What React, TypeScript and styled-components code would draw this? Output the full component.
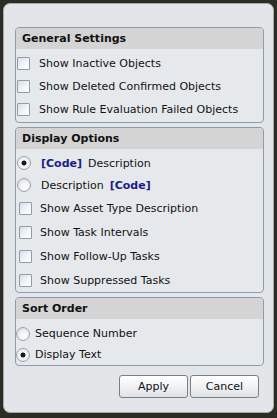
import styled, { createGlobalStyle } from "styled-components";

const GlobalStyle = createGlobalStyle`
  html, body {
    margin: 0;
    padding: 0;
    background: #2c2c24;
  }
  body {
    font-family: "DejaVu Sans", "Liberation Sans", sans-serif;
    font-size: 11px;
    color: #111;
  }
`;

interface Option {
  label: string;
  kind: "check" | "radio";
  checked?: boolean;
  codeFirst?: boolean;
  codeLast?: boolean;
}

const generalOptions: Option[] = [
  { label: "Show Inactive Objects", kind: "check" },
  { label: "Show Deleted Confirmed Objects", kind: "check" },
  { label: "Show Rule Evaluation Failed Objects", kind: "check" },
];

const displayOptions: Option[] = [
  { label: "Description", kind: "radio", checked: true, codeFirst: true },
  { label: "Description", kind: "radio", codeLast: true },
  { label: "Show Asset Type Description", kind: "check" },
  { label: "Show Task Intervals", kind: "check" },
  { label: "Show Follow-Up Tasks", kind: "check" },
  { label: "Show Suppressed Tasks", kind: "check" },
];

const sortOptions: Option[] = [
  { label: "Sequence Number", kind: "radio" },
  { label: "Display Text", kind: "radio", checked: true },
];

function OptionRow({
  option,
  height,
  indent,
  gap,
}: {
  option: Option;
  height: number;
  indent: number;
  gap: number;
}) {
  return (
    <Row $height={height} $indent={indent} $gap={gap}>
      {option.kind === "check" ? (
        <CheckBox type="checkbox" defaultChecked={option.checked} />
      ) : (
        <Radio type="radio" defaultChecked={option.checked} readOnly />
      )}
      <Label>
        {option.codeFirst && <Code>[Code]</Code>}
        {option.label}
        {option.codeLast && <Code $after>[Code]</Code>}
      </Label>
    </Row>
  );
}

function App() {
  return (
    <>
      <GlobalStyle />
      <Screen>
        <Dialog>
          <Group>
            <GroupHeader>General Settings</GroupHeader>
            <GroupBody $top={3} $bottom={1}>
              {generalOptions.map((o) => (
                <OptionRow key={o.label} option={o} height={23} indent={1} gap={9} />
              ))}
            </GroupBody>
          </Group>
          <Group>
            <GroupHeader>Display Options</GroupHeader>
            <GroupBody $top={3} $bottom={0}>
              {displayOptions.map((o, i) =>
                o.kind === "radio" ? (
                  <OptionRow key={i} option={o} height={22} indent={1} gap={10} />
                ) : (
                  <OptionRow key={i} option={o} height={24} indent={3} gap={8} />
                )
              )}
            </GroupBody>
          </Group>
          <Group>
            <GroupHeader>Sort Order</GroupHeader>
            <GroupBody $top={4} $bottom={0}>
              {sortOptions.map((o) => (
                <OptionRow key={o.label} option={o} height={21} indent={0} gap={5} />
              ))}
            </GroupBody>
          </Group>
          <Buttons>
            <Button>Apply</Button>
            <Button>Cancel</Button>
          </Buttons>
        </Dialog>
      </Screen>
    </>
  );
}

const Screen = styled.div`
  width: 277px;
  height: 418px;
  padding: 3px 3px 5px 3px;
  box-sizing: border-box;
`;

const Dialog = styled.div`
  height: 100%;
  box-sizing: border-box;
  padding: 23px 9px 0 11px;
  background: #e3e6e9;
  border: 1px solid #a4a9ae;
  border-radius: 7px;
  display: flex;
  flex-direction: column;
  gap: 4px;
`;

const Group = styled.section`
  border: 1px solid #8d9bae;
  border-radius: 4px;
  background: #e6e9ec;
  overflow: hidden;
`;

const GroupHeader = styled.div`
  height: 21px;
  line-height: 21px;
  padding-left: 6px;
  background: #d4d4d4;
  font-weight: bold;
  font-size: 11px;
  color: #111;
`;

const GroupBody = styled.div<{ $top: number; $bottom: number }>`
  display: flex;
  flex-direction: column;
  padding: ${(p) => p.$top}px 0 ${(p) => p.$bottom}px 0;
`;

const Row = styled.label<{ $height: number; $indent: number; $gap: number }>`
  display: flex;
  align-items: center;
  height: ${(p) => p.$height}px;
  padding-left: ${(p) => p.$indent}px;
  gap: ${(p) => p.$gap}px;
`;

const CheckBox = styled.input`
  appearance: none;
  margin: 0;
  width: 13px;
  height: 13px;
  box-sizing: border-box;
  border: 1px solid #8e9cae;
  border-radius: 1px;
  background: linear-gradient(135deg, #d9dee4 0%, #f4f6f8 60%, #ffffff 100%);
  flex: none;
`;

const Radio = styled.input`
  appearance: none;
  margin: 0;
  width: 14px;
  height: 14px;
  box-sizing: border-box;
  border: 1px solid #98a2ad;
  border-radius: 50%;
  background: radial-gradient(circle at 60% 65%, #ffffff 0%, #eef0f2 45%, #c9ced4 100%);
  flex: none;
  &:checked {
    background: radial-gradient(circle, #1a1a1a 0 2.2px, #f6f7f8 2.8px, #dde1e5 100%);
  }
`;

const Label = styled.span`
  white-space: nowrap;
`;

const Code = styled.b<{ $after?: boolean }>`
  color: #1c1c8a;
  margin: ${(p) => (p.$after ? "0 0 0 6px" : "0 6px 0 0")};
`;

const Buttons = styled.div`
  display: flex;
  justify-content: flex-end;
  gap: 2px;
  margin-top: 5px;
  padding-right: 5px;
`;

const Button = styled.button`
  width: 69px;
  height: 23px;
  border: 1px solid #7a7f86;
  border-radius: 3px;
  background: linear-gradient(#ffffff 0%, #f1f2f4 50%, #dfe2e6 100%);
  font-family: "DejaVu Sans", "Liberation Sans", sans-serif;
  font-size: 11px;
  color: #111;
  padding: 0;
`;

export default App;
